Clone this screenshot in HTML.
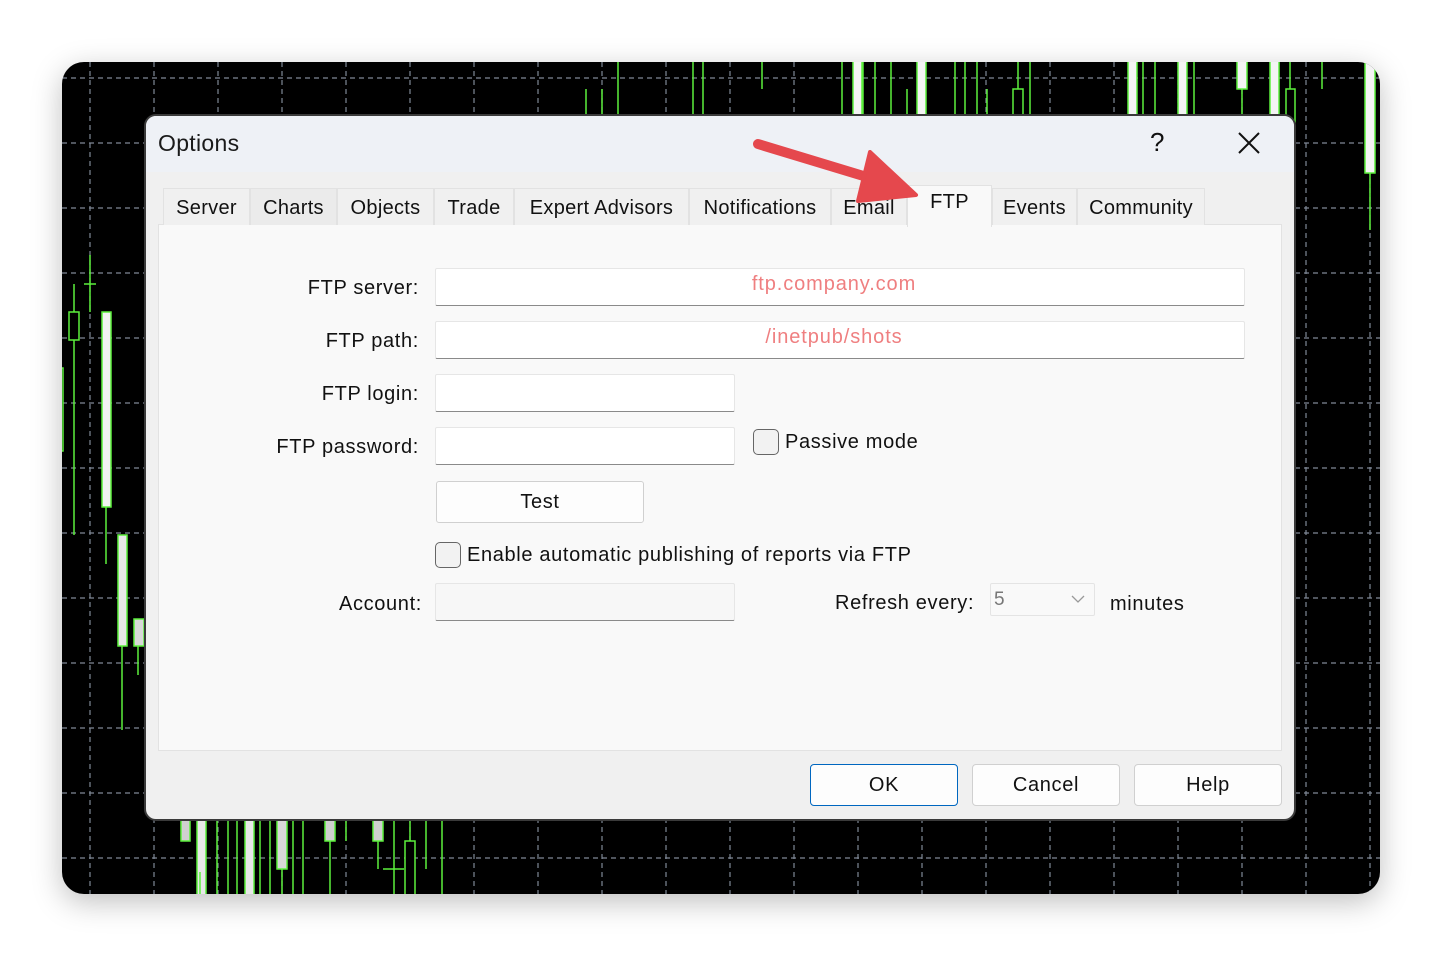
<!DOCTYPE html>
<html><head><meta charset="utf-8"><style>
*{box-sizing:border-box;margin:0;padding:0}
body{width:1442px;height:956px;background:#fff;position:relative;overflow:hidden;font-family:"Liberation Sans",sans-serif;color:#111}
.chart{position:absolute;left:62px;top:62px;width:1318px;height:832px;background:#000;border-radius:22px;overflow:hidden;box-shadow:0 8px 30px rgba(0,0,0,.25)}
.dlg{position:absolute;left:144px;top:114px;width:1152px;height:707px;background:#f0f0f0;border:2px solid #3a3a3a;border-radius:12px;overflow:hidden;letter-spacing:0.65px}
.title{position:absolute;left:0;top:0;width:100%;height:56px;background:#eef1f6}
.title .t{position:absolute;left:12px;top:14px;font-size:23px;color:#1a1a1a;letter-spacing:0.3px}
.abs{position:absolute}
.tab{position:absolute;top:72px;height:37px;background:#f0f0f0;border:1px solid #e2e2e2;border-bottom:none;font-size:20px;padding-top:8px;text-align:center;letter-spacing:0.3px}
.panel{position:absolute;left:11px;top:107px;width:1124px;height:527px;background:#f9f9f9;border:1px solid #e2e2e2}
.lbl{position:absolute;font-size:20px;text-align:right}
.inp{position:absolute;background:#fff;border:1px solid #e6e6e6;border-bottom:1px solid #8a8a8a;border-radius:2px}
.red{color:#ef7f80;font-size:20px;position:absolute;width:100%;text-align:center;top:4px;left:-6px;letter-spacing:0.9px}
.cb{position:absolute;width:26px;height:26px;border:1.5px solid #666;border-radius:5px;background:#f2f2f2}
.btn{position:absolute;background:#fdfdfd;border:1px solid #d0d0d0;border-radius:4px;font-size:20px;text-align:center;padding-top:9px}
</style></head><body>
<div class="chart">
<svg width="1318" height="832" xmlns="http://www.w3.org/2000/svg">
<g stroke="#7f8896" stroke-width="1.2" stroke-dasharray="5,4">
<line x1="28" y1="0" x2="28" y2="832"/><line x1="92" y1="0" x2="92" y2="832"/><line x1="156" y1="0" x2="156" y2="832"/><line x1="220" y1="0" x2="220" y2="832"/><line x1="284" y1="0" x2="284" y2="832"/><line x1="348" y1="0" x2="348" y2="832"/><line x1="412" y1="0" x2="412" y2="832"/><line x1="476" y1="0" x2="476" y2="832"/><line x1="540" y1="0" x2="540" y2="832"/><line x1="604" y1="0" x2="604" y2="832"/><line x1="668" y1="0" x2="668" y2="832"/><line x1="732" y1="0" x2="732" y2="832"/><line x1="796" y1="0" x2="796" y2="832"/><line x1="860" y1="0" x2="860" y2="832"/><line x1="924" y1="0" x2="924" y2="832"/><line x1="988" y1="0" x2="988" y2="832"/><line x1="1052" y1="0" x2="1052" y2="832"/><line x1="1116" y1="0" x2="1116" y2="832"/><line x1="1180" y1="0" x2="1180" y2="832"/><line x1="1244" y1="0" x2="1244" y2="832"/><line x1="1308" y1="0" x2="1308" y2="832"/>
<line x1="0" y1="16" x2="1318" y2="16"/><line x1="0" y1="81" x2="1318" y2="81"/><line x1="0" y1="146" x2="1318" y2="146"/><line x1="0" y1="211" x2="1318" y2="211"/><line x1="0" y1="276" x2="1318" y2="276"/><line x1="0" y1="341" x2="1318" y2="341"/><line x1="0" y1="406" x2="1318" y2="406"/><line x1="0" y1="471" x2="1318" y2="471"/><line x1="0" y1="536" x2="1318" y2="536"/><line x1="0" y1="601" x2="1318" y2="601"/><line x1="0" y1="666" x2="1318" y2="666"/><line x1="0" y1="731" x2="1318" y2="731"/><line x1="0" y1="796" x2="1318" y2="796"/>
</g>
<g stroke="#5cf03c" stroke-width="1.5" fill="none">
<line x1="12" y1="222" x2="12" y2="473"/><rect x="7" y="250" width="10" height="28" fill="#000"/>
<line x1="28" y1="193" x2="28" y2="250"/><line x1="22" y1="222" x2="34" y2="222"/>
<line x1="44" y1="445" x2="44" y2="502"/><rect x="40" y="250" width="9" height="195" fill="#f2f2f2"/>
<line x1="60" y1="584" x2="60" y2="668"/><rect x="56" y="473" width="9" height="111" fill="#e8e8e8"/>
<line x1="76" y1="584" x2="76" y2="613"/><rect x="72" y="557" width="10" height="27" fill="#d8d8d8"/>
<rect x="-5" y="306" width="6" height="83" fill="#000"/>
<line x1="524" y1="27" x2="524" y2="60"/><line x1="540" y1="27" x2="540" y2="60"/><line x1="556" y1="0" x2="556" y2="60"/>
<line x1="631" y1="0" x2="631" y2="60"/><line x1="641" y1="0" x2="641" y2="60"/><line x1="700" y1="0" x2="700" y2="27"/>
<line x1="780" y1="0" x2="780" y2="60"/><rect x="791" y="-2" width="9" height="62" fill="#f4f4f4"/>
<line x1="801" y1="0" x2="801" y2="60"/><line x1="813" y1="0" x2="813" y2="60"/><line x1="829" y1="0" x2="829" y2="60"/><line x1="845" y1="27" x2="845" y2="60"/>
<rect x="855" y="-2" width="9" height="62" fill="#f4f4f4"/>
<line x1="893" y1="0" x2="893" y2="60"/><line x1="903" y1="0" x2="903" y2="60"/><line x1="915" y1="0" x2="915" y2="60"/><line x1="925" y1="27" x2="925" y2="60"/>
<line x1="956" y1="0" x2="956" y2="27"/><rect x="951" y="27" width="10" height="33" fill="#000"/><line x1="968" y1="0" x2="968" y2="60"/>
<rect x="1066" y="-2" width="9" height="62" fill="#f4f4f4"/><line x1="1081" y1="0" x2="1081" y2="60"/><line x1="1093" y1="0" x2="1093" y2="60"/><rect x="1116" y="-2" width="9" height="62" fill="#f4f4f4"/><line x1="1132" y1="0" x2="1132" y2="60"/>
<rect x="1175" y="-2" width="10" height="29" fill="#f4f4f4"/><line x1="1180" y1="27" x2="1180" y2="60"/>
<rect x="1208" y="-2" width="9" height="62" fill="#f4f4f4"/><line x1="1228" y1="0" x2="1228" y2="27"/><rect x="1224" y="27" width="9" height="33" fill="#000"/><line x1="1260" y1="0" x2="1260" y2="27"/>
<rect x="1303" y="-2" width="10" height="113" fill="#f4f4f4"/><line x1="1308" y1="111" x2="1308" y2="168"/>
<rect x="119" y="750" width="9" height="29" fill="#d0d0d0"/><rect x="135" y="750" width="9" height="90" fill="#e8e8e8"/>
<line x1="155" y1="750" x2="155" y2="840"/><line x1="166" y1="750" x2="166" y2="840"/><line x1="175" y1="750" x2="175" y2="840"/>
<rect x="183" y="750" width="9" height="90" fill="#e8e8e8"/><line x1="198" y1="750" x2="198" y2="840"/><line x1="208" y1="750" x2="208" y2="840"/>
<rect x="215" y="750" width="10" height="57" fill="#d8d8d8"/><line x1="220" y1="807" x2="220" y2="840"/>
<line x1="231" y1="750" x2="231" y2="840"/><line x1="241" y1="750" x2="241" y2="840"/><line x1="138" y1="810" x2="138" y2="840"/>
<rect x="263" y="750" width="10" height="29" fill="#d0d0d0"/><line x1="268" y1="779" x2="268" y2="840"/><line x1="284" y1="750" x2="284" y2="779"/>
<rect x="311" y="750" width="10" height="29" fill="#d0d0d0"/><line x1="316" y1="779" x2="316" y2="807"/>
<line x1="332" y1="750" x2="332" y2="840"/><line x1="321" y1="807" x2="342" y2="807"/>
<line x1="348" y1="750" x2="348" y2="779"/><rect x="343" y="779" width="10" height="60" fill="#000"/>
<line x1="364" y1="750" x2="364" y2="807"/><line x1="380" y1="750" x2="380" y2="840"/>
</g>
</svg>
</div>

<div class="dlg">
<div class="title"><div class="t">Options</div>
<div class="abs" style="left:1004px;top:11px;font-size:26px">?</div>
<svg class="abs" style="left:1091px;top:15px" width="24" height="24"><path d="M2 2L22 22M22 2L2 22" stroke="#111" stroke-width="2"/></svg>
</div>
<div class="panel" style="left:12px;top:108px"></div>
<div class="tab" style="left:17px;width:87px">Server</div>
<div class="tab" style="left:104px;width:87px;background:#ebebeb">Charts</div>
<div class="tab" style="left:191px;width:97px">Objects</div>
<div class="tab" style="left:288px;width:80px">Trade</div>
<div class="tab" style="left:368px;width:175px">Expert Advisors</div>
<div class="tab" style="left:543px;width:142px">Notifications</div>
<div class="tab" style="left:685px;width:76px">Email</div>
<div class="tab" style="left:761px;width:85px;top:69px;height:42px;background:#f9f9f9;padding-top:5px;z-index:2">FTP</div>
<div class="tab" style="left:846px;width:85px">Events</div>
<div class="tab" style="left:931px;width:128px">Community</div>

<div class="lbl" style="right:875px;top:161px">FTP server:</div>
<div class="lbl" style="right:875px;top:214px">FTP path:</div>
<div class="lbl" style="right:875px;top:267px">FTP login:</div>
<div class="lbl" style="right:875px;top:320px">FTP password:</div>
<div class="lbl" style="right:872px;top:477px">Account:</div>

<div class="inp" style="left:289px;top:152px;width:810px;height:38px"><div class="red">ftp.company.com</div></div>
<div class="inp" style="left:289px;top:205px;width:810px;height:38px"><div class="red">/inetpub/shots</div></div>
<div class="inp" style="left:289px;top:258px;width:300px;height:38px"></div>
<div class="inp" style="left:289px;top:311px;width:300px;height:38px"></div>
<div class="cb" style="left:607px;top:313px"></div>
<div class="abs" style="left:639px;top:315px;font-size:20px">Passive mode</div>
<div class="btn" style="left:290px;top:365px;width:208px;height:42px;border-radius:3px">Test</div>
<div class="cb" style="left:289px;top:426px"></div>
<div class="abs" style="left:321px;top:428px;font-size:20px">Enable automatic publishing of reports via FTP</div>
<div class="inp" style="left:289px;top:467px;width:300px;height:38px;background:#f7f7f7"></div>
<div class="abs" style="left:689px;top:476px;font-size:20px">Refresh every:</div>
<div class="abs" style="left:844px;top:467px;width:105px;height:33px;border:1px solid #e4e4e4;background:#f9f9f9;border-radius:2px">
<span class="abs" style="left:3px;top:5px;font-size:19px;color:#777">5</span>
<svg class="abs" style="left:80px;top:11px" width="14" height="9"><path d="M1 1L7 7L13 1" stroke="#999" fill="none" stroke-width="1.3"/></svg></div>
<div class="abs" style="left:964px;top:477px;font-size:20px">minutes</div>

<div class="btn" style="left:664px;top:648px;width:148px;height:42px;border:1.5px solid #0067c0">OK</div>
<div class="btn" style="left:826px;top:648px;width:148px;height:42px">Cancel</div>
<div class="btn" style="left:988px;top:648px;width:148px;height:42px">Help</div>
</div>

<svg class="abs" style="left:0;top:0;z-index:5" width="1442" height="956">
<line x1="758" y1="144" x2="880" y2="181" stroke="#e5484d" stroke-width="10" stroke-linecap="round"/>
<polygon points="870,152 916,195 858,201" fill="#e5484d" stroke="#e5484d" stroke-width="4" stroke-linejoin="round"/>
</svg>
</body></html>
